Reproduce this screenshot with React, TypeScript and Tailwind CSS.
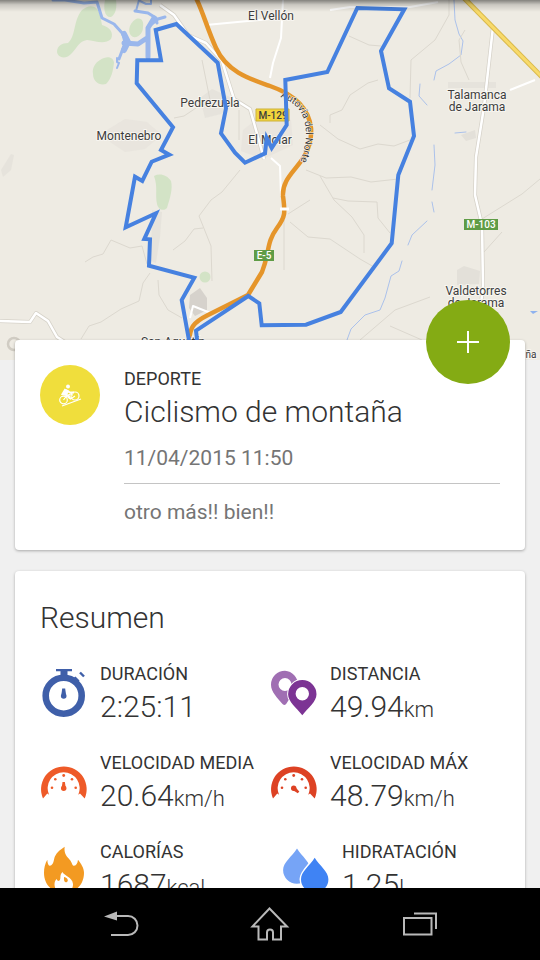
import type { ReactNode } from 'react'

interface Stat {
  label: string
  value: string
  unit?: string
  icon: ReactNode
  inset?: boolean
}

function StopwatchIcon() {
  return (
    <svg viewBox="0 0 48 50" className="h-[50px] w-12 shrink-0" fill="#3f5fa9" aria-hidden="true">
      <circle cx="23.7" cy="27.7" r="18" fill="none" stroke="#3f5fa9" strokeWidth="6.6" />
      <path d="M16 1h16v2.200h-4.500v4.500h-7V3.200H16z" />
      <path d="M35.500 8.500l4 4-2.500 3-5-4.500z" />
      <path d="M40 4.500l4 4" stroke="#3f5fa9" strokeWidth="2.400" />
      <path d="M22.200 20.500h3l.8 6h-4.600z" />
      <circle cx="23.700" cy="28" r="2.800" />
    </svg>
  )
}

function PinsIcon() {
  return (
    <svg viewBox="0 0 48 50" className="h-[50px] w-12 shrink-0" fillRule="evenodd" aria-hidden="true">
      <path
        fill="#a06fb3"
        d="M15 2.700a14 14 0 0 0-14 14c0 7.500 6.500 13 11.500 19.300q2.500 2 4-.5L28 16.700a14 14 0 0 0-13-14zm0 7.300a6.500 6.500 0 1 1 0 13 6.500 6.500 0 0 1 0-13z"
      />
      <path
        fill="#7c3494"
        stroke="#fff"
        strokeWidth="2"
        paintOrder="stroke"
        d="M32.300 12a14.200 14.200 0 0 0-14.200 14.200c0 7.500 8.200 13.300 14.200 21.100 6-7.800 14.200-13.600 14.200-21.100A14.200 14.200 0 0 0 32.300 12zm0 7a6.700 6.700 0 1 1 0 13.400 6.700 6.700 0 0 1 0-13.400z"
      />
    </svg>
  )
}

function GaugeIcon({ color, angle }: { color: string; angle: number }) {
  return (
    <svg viewBox="0 0 48 50" className="h-[50px] w-12 shrink-0" fill={color} aria-hidden="true">
      <path d="M3 41.500A22.800 22.800 0 1 1 44.700 41.500L40 36.500l-1.700 1.200A16 16 0 1 0 9 37.700L7.300 36.500z" />
      <circle cx="12" cy="30.700" r="1.300" />
      <circle cx="15.300" cy="22.300" r="1.300" />
      <circle cx="23.700" cy="18.500" r="1.400" />
      <circle cx="32" cy="22.300" r="1.300" />
      <circle cx="35.700" cy="30.700" r="1.300" />
      <circle cx="23.700" cy="31.300" r="2.700" />
      <path d="M22.500 25h2.400l.8 6h-4z" transform={`rotate(${angle} 23.7 31.3)`} />
    </svg>
  )
}

function FlameIcon() {
  return (
    <svg viewBox="0 0 48 50" className="h-[50px] w-12 shrink-0" fill="#f39a22" aria-hidden="true">
      <path d="M24.700.7c-1 7 2 9.500 5 13 2.500 3 2.800 6 3.800 6 2.500 0 4-2 4.500-6 3 4 6 8 6 13 0 11-7 20-20 20s-20-9-20-20c0-5 1-9 3.300-13 .2 4 1.200 6 2.700 6 4-1 3.500-6 5-9.500 2-4.500 6-7 9.700-9.500z" />
      <path
        fill="#fff"
        d="M22.500 26c1 3.500 10 5 10.500 12 .3 6-4.500 9-9.500 9s-9-3.500-9-8.500c0-2.500.6-4 2-5.500 1 2 2 2.500 3 1.500 2-2-.5-5 3-8.500z"
      />
      <path d="M24 31c3 .5 5 3 3 5-1.800 1.200-3.500-.5-3-5z" />
    </svg>
  )
}

function DropsIcon() {
  return (
    <svg viewBox="0 0 48 50" className="h-[50px] w-12 shrink-0" aria-hidden="true">
      <path fill="#76a4f6" d="M15 2.500c5 8 13.500 14 13.500 21.500a13.700 13.700 0 0 1-27.400 0C1.100 16.500 10 10.500 15 2.500z" />
      <path
        fill="#3f83f4"
        stroke="#fff"
        strokeWidth="3"
        paintOrder="stroke"
        d="M32.700 11.700c5 8 13.700 14 13.700 21.500a13.700 13.700 0 0 1-27.400 0c0-7.500 8.700-13.500 13.700-21.500z"
      />
    </svg>
  )
}

function BikerIcon() {
  return (
    <svg viewBox="0 0 24 24" className="h-6 w-6" fill="none" stroke="#fff" strokeWidth="1.200" aria-hidden="true">
      <circle cx="5.500" cy="17" r="3.800" />
      <circle cx="17" cy="13" r="4" />
      <path d="M5.500 17l3-4 4 3 4.500-3M4 23l19-7M8.500 13l5-2.500 1 2" />
      <circle cx="10" cy="3.500" r="2" fill="#fff" stroke="none" />
      <path d="M7.500 6l-3 5 6 1.500 1.500 3M8 7l4 2.500h4" strokeWidth="2" />
      <path d="M7.500 6l4 2-3 4.500-4-1z" fill="#fff" stroke="none" />
    </svg>
  )
}

const stats: Stat[] = [
  { label: 'DURACIÓN', value: '2:25:11', icon: <StopwatchIcon /> },
  { label: 'DISTANCIA', value: '49.94', unit: 'km', icon: <PinsIcon /> },
  { label: 'VELOCIDAD MEDIA', value: '20.64', unit: 'km/h', icon: <GaugeIcon color="#ee5a28" angle={0} /> },
  { label: 'VELOCIDAD MÁX', value: '48.79', unit: 'km/h', icon: <GaugeIcon color="#dd4224" angle={130} /> },
  { label: 'CALORÍAS', value: '1687', unit: 'kcal', icon: <FlameIcon /> },
  { label: 'HIDRATACIÓN', value: '1.25', unit: 'L', icon: <DropsIcon />, inset: true },
]

function RouteMap() {
  return (
    <svg
      viewBox="0 0 540 360"
      preserveAspectRatio="xMidYMid slice"
      className="block h-[360px] w-full bg-[#eeebe3]"
      role="img"
      aria-label="Mapa de la ruta"
    >
      <defs>
        <linearGradient id="shade" x1="0" y1="0" x2="0" y2="1">
          <stop offset="0" stopColor="#000" stopOpacity=".45" />
          <stop offset=".4" stopColor="#000" stopOpacity=".15" />
          <stop offset="1" stopColor="#000" stopOpacity="0" />
        </linearGradient>
        <path id="autovia" d="M280 97C295 102 303 112 305 124C307 135 306 144 301 160" />
      </defs>

      {/* Parks */}
      <g fill="#d3e3c6">
        <path d="M82 10c8-7 16-4 18 5l2 10c8 2 12 8 9 14-6 6-16 2-24 1-8 1-10 8-15 13-6 7-14 5-15-1 0-6 5-9 11-9 8-7 5-22 14-33z" />
        <path d="M105 0h11c1 7 0 14-5 17-6 1-8-8-6-17z" />
        <path d="M136 19c6-2 8 3 7 8 0 6-4 11-10 10-6-3-5-13 3-18z" />
        <path d="M100 60c7-5 14-3 14 3-1 7-2 15-8 21-7 2-13-3-13-10-1-6 2-11 7-14z" />
        <path d="M154 176c6-3 13-1 17 5 2 8-1 17-4 27-4 4-9 1-10-4-2-10 1-17-3-28z" />
        <circle cx="205" cy="277" r="5.500" />
      </g>

      {/* Built-up areas */}
      <g fill="#e3e0d9">
        <path d="M107 130l18-11 22 3 15 13-17 14-20 3-15-10z" opacity=".5" />
        <path d="M190 295l10-7 7 10v12l-12 6-6-8z" fill="#d6d2cc" />
        <path d="M200 98l12-9 18 8 3 9-12 8-16 4z" opacity=".7" />
        <path d="M243 130l18-14 30 4 2 25-30 14-22-8z" opacity=".5" />
        <path d="M457 270l7-4 16 5-1 13-22 1z" />
        <path d="M448 82h48v6h-48z" opacity=".7" />
        <path d="M461 135l14-5 1 8-10 3z" />
        <path d="M1 170l10-16 3 1-3 15-8 7z" opacity=".7" />
        <path d="M152 210l10 2-2 25-4 26-5-2z" opacity=".7" />
      </g>

      {/* Water */}
      <g fill="none" stroke="#9ab7ec" strokeLinecap="round" strokeLinejoin="round">
        <path d="M53 0h12l19 3 13-1 5 16 12 6 9 10 2 9-6 16" strokeWidth="3" />
        <path d="M124 43l14 1 9-6M148 57v-29l6-10" strokeWidth="5" />
        <path d="M135 11l13 2 8 5 1 5M148 27l10-8 7-2" strokeWidth="3" />
        <path d="M124 34l4 8-4 8" strokeWidth="6" />
        <path d="M117 58v4l2 1-2 5M139 0l-3 11M140 1l6 3h5V0" strokeWidth="2" />
        <path
          d="M454 0l1 20 4 14 4 7-2 14-12 9-13 7-2 9M420 84l-1 12 8 9M434 145l1 20-3 25M427 221l-15 14-4 10M402 261l-3 10-8 5-6 22-5 12-15 5-14 14-4 11M432 202l2 10M455 133l11-1"
          strokeWidth="1"
          opacity=".8"
        />
      </g>
      <path d="M530 311h8l-5 3z" fill="#8fb2ee" />

      {/* Minor roads */}
      <g fill="none" stroke="#dcd8cf" strokeWidth="1">
        <path d="M449 0v15l-14 25-24 20-1 38M349 36l20 9 12 1M378 80l-10 3-18 12-8 15-12 5v8" />
        <path d="M320 125l18 14 22 10 18-5 16 2 16-6M306 170l20 8 25-1 20 5 27-3M320 176l14 24 18 17 12 18v18" />
        <path d="M290 222l18 15 22 2 30 20 14 8M333 198l15 3 29 1 1 16 12 15" />
        <path d="M240 170l-18 22-11 8-12 16 12 30 1 35M173 250l12-9 9-12 9-1" />
        <path d="M85 262l8-5 10-3 8-14 19 8 12-2 5 18M150 273l-7 10-4 18-18 8-20 13-12 4-8 13" />
        <path d="M158 280l1 15 9 15 14 8M174 118l10-2 12-8M202 60l8 40M239 110v30" />
        <path d="M540 179l-18 15-40 25M502 232l-18 20M465 30l-6 10 2 22 8 18M360 340l35-30 35-13M390 326l32 14" />
        <path d="M284 220v50M310 200l-22 14" />
      </g>

      {/* White roads */}
      <g fill="none" strokeLinejoin="round">
        <g stroke="#d6d2c9" strokeWidth="4">
          <path d="M493 27l-9 80-8 50-1 38 7 30 1 60-3 30M160 5l14 10 14 20 18 8 16 18 12 38 16 10 8 28 6 22M0 321l30 1 6-9 12 8 9 16 14 9" />
        </g>
        <g stroke="#fff" strokeWidth="2.500">
          <path d="M493 27l-9 80-8 50-1 38 7 30 1 60-3 30M160 5l14 10 14 20 18 8 16 18 12 38 16 10 8 28 6 22M0 321l30 1 6-9 12 8 9 16 14 9" />
          <path
            d="M271 158l9 8 1 30M283 0l-2 38-8 25-3 15M206 25l64-6M330 10l20-3 60 0 28-5M510 90l25-10M190 318l3-12 20 8"
            strokeWidth="2"
          />
          <circle cx="14" cy="344" r="6" stroke="#d0ccc3" />
        </g>
      </g>

      {/* Highways */}
      <g fill="none" strokeLinejoin="round">
        <path d="M464-2L544 79" stroke="#d9b94c" strokeWidth="5" />
        <path d="M464-2L544 79" stroke="#f8da6a" strokeWidth="3" />
        <path
          d="M196-2C203 12 207 28 216 48C227 72 250 79 270 86C296 95 309 110 311 128C312 140 308 150 304 157C294 172 282 180 283 196C285 212 286 216 277 228C266 243 270 252 262 272L248 295L208 315C192 323 190 328 189 342"
          stroke="#e5952a"
          strokeWidth="4.500"
        />
      </g>
      <path d="M280 209h9" stroke="#fff" strokeWidth="3" />

      {/* Place names */}
      <g
        fill="#3c3c3c"
        stroke="#f7f5f0"
        strokeWidth="2"
        paintOrder="stroke"
        textAnchor="middle"
        className="font-['Roboto',sans-serif] text-[12px]"
      >
        <text x="271" y="20">El Vellón</text>
        <text x="210" y="107">Pedrezuela</text>
        <text x="129" y="140">Montenebro</text>
        <text x="270" y="144">El Molar</text>
        <text x="477" y="99">Talamanca</text>
        <text x="477" y="111">de Jarama</text>
        <text x="476" y="295">Valdetorres</text>
        <text x="476" y="307">de Jarama</text>
        <text x="173" y="346">San Agustín</text>
        <text x="531" y="358" className="text-[10px]">ña</text>
        <text textAnchor="start" strokeWidth="1" className="text-[10px]">
          <textPath href="#autovia">Autovía del Norte</textPath>
        </text>
      </g>

      {/* Road shields */}
      <g textAnchor="middle" className="font-['Roboto',sans-serif] text-[10px] font-medium">
        <path d="M256 109h33v12h-33z" fill="#f2d43c" stroke="#cdb13a" />
        <text x="273" y="119" fill="#3c3c3c">M-129</text>
        <path d="M254 250h20v11h-20z" fill="#5f9c46" />
        <text x="264" y="259" fill="#fff">E-5</text>
        <path d="M464 219h34v11h-34z" fill="#5f9c46" />
        <text x="481" y="228" fill="#fff">M-103</text>
      </g>

      {/* Recorded track */}
      <path
        d="M189.300 342L181.700 300L194.300 277.700L149 265.700L150 239.300L144.300 239L156 213.300L125.700 227.300L135 176.700L142.300 181L151.700 161.700L169.300 154.700L161 150L173 127.300L136.700 83.300L137.300 60.300L161 60.300L155.700 30L176.300 24L217.700 62.700L226 108.300L221 133.300L235 152.700L245 162.700L265 153.300L266.700 138L271.700 148L286.700 125L285.300 80L327.300 72L357.300 8L404.300 9.300L381 51L389 88.300L410 101.700L414 136L398.300 175L391.700 243.300L340.700 312L306 324.700L261.700 325.300L259.300 303.300L248.300 296L196 330.700L197.300 342"
        fill="none"
        stroke="#4681e0"
        strokeWidth="4"
      />
      <rect width="540" height="12" fill="url(#shade)" />
    </svg>
  )
}

function StatItem({ stat }: { stat: Stat }) {
  return (
    <div className={stat.inset ? 'flex gap-3 pl-3' : 'flex gap-3'}>
      <div className="pt-1.5">{stat.icon}</div>
      <dl className="whitespace-nowrap">
        <dt className="text-[18px] leading-6">{stat.label}</dt>
        <dd className="h-[42px] text-[30px] leading-[42px] font-light">
          {stat.value}
          {stat.unit && <span className="text-[22px]">{stat.unit}</span>}
        </dd>
      </dl>
    </div>
  )
}

function NavBar() {
  return (
    <nav className="flex h-[72px] shrink-0 bg-black px-[45px] text-[#b9b9b9]">
      <button aria-label="Atrás" className="flex flex-1 items-center justify-center">
        <svg viewBox="0 0 40 40" className="h-10 w-10" fill="none" stroke="currentColor" strokeWidth="2">
          <path d="M16 12h12a9.500 9.500 0 0 1 0 19H11" />
          <path d="M4 12.500l13-5v9z" fill="currentColor" stroke="none" />
        </svg>
      </button>
      <button aria-label="Inicio" className="flex flex-1 items-center justify-center">
        <svg viewBox="0 0 40 40" className="h-10 w-10" fill="none" stroke="currentColor" strokeWidth="2">
          <path d="M19.500 4.500L2.500 22.500h6v13H17V28.500a3 3 0 0 1 6 0V35.500h8v-13h6z" />
        </svg>
      </button>
      <button aria-label="Recientes" className="flex flex-1 items-center justify-center">
        <svg viewBox="0 0 40 40" className="h-10 w-10" fill="none" stroke="currentColor" strokeWidth="2">
          <path d="M4 14h27.500v16.500H4zM14 9.500h22V25" />
        </svg>
      </button>
    </nav>
  )
}

export default function App() {
  return (
    <div className="flex h-screen flex-col bg-[#f0f0f0] font-['Roboto',sans-serif] text-[#333]">
      <main className="min-h-0 flex-1 overflow-y-auto [scrollbar-width:none]">
        <RouteMap />

        <div className="relative -mt-5 flex flex-col gap-[21px] px-[15px] pb-5">
          {/* Activity */}
          <section className="relative flex gap-6 rounded bg-white px-[25px] pt-[25px] pb-6 shadow-[0_1px_3px_rgba(0,0,0,0.3)]">
            <div className="flex h-[60px] w-[60px] shrink-0 items-center justify-center rounded-full bg-[#f0de3c]">
              <BikerIcon />
            </div>
            <div className="min-w-0 flex-1">
              <p className="text-[18px] leading-7">DEPORTE</p>
              <h1 className="text-[30px] leading-[38px] font-light">Ciclismo de montaña</h1>
              <p className="mt-[13px] border-b border-[#c4c4c4] pb-[11px] text-[21px] leading-7 text-[#757575]">
                11/04/2015 11:50
              </p>
              <p className="mt-3.5 text-[21px] leading-7 text-[#757575]">otro más!! bien!!</p>
            </div>
            <button
              aria-label="Añadir"
              className="absolute -top-10 right-[15px] flex h-[84px] w-[84px] items-center justify-center rounded-full bg-[#84ab14]"
            >
              <svg viewBox="0 0 22 22" className="h-[22px] w-[22px]" stroke="#fff" strokeWidth="2">
                <path d="M11 0v22M0 11h22" />
              </svg>
            </button>
          </section>

          {/* Summary */}
          <section className="rounded bg-white p-[25px] shadow-[0_1px_3px_rgba(0,0,0,0.3)]">
            <h2 className="text-[30px] leading-[44px] font-light">Resumen</h2>
            <div className="mt-[22px] grid grid-cols-2 gap-y-[23px]">
              {stats.map((stat) => (
                <StatItem key={stat.label} stat={stat} />
              ))}
            </div>
          </section>
        </div>
      </main>
      <NavBar />
    </div>
  )
}
